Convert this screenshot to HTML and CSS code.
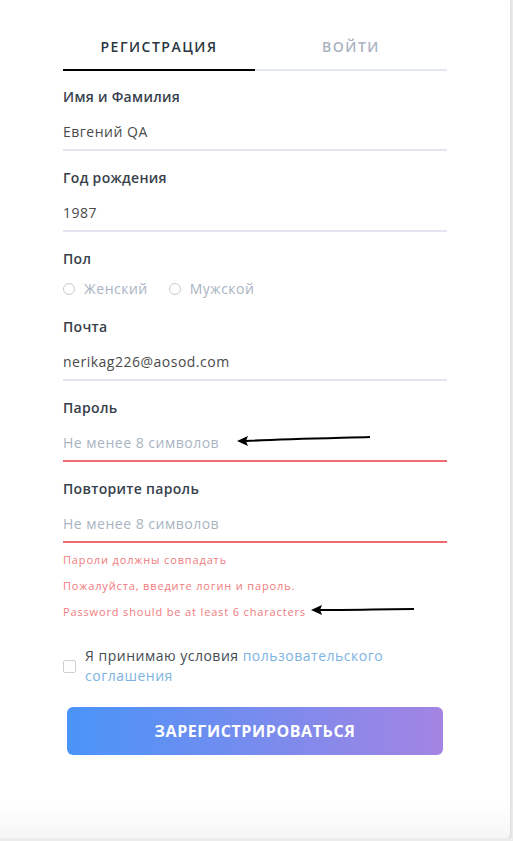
FILE: index.html
```html
<!DOCTYPE html>
<html lang="ru">

<head>
    <meta charset="UTF-8">
    <meta name="viewport" content="width=device-width, initial-scale=1.0">
    <title>Регистрация</title>
    <link rel="stylesheet" href="styles.css">
</head>

<body>
    <div class="card">
        <div class="tabs">
            <div class="tab active">Регистрация</div>
            <div class="tab">Войти</div>
        </div>

        <form class="form">
            <div class="field">
                <div class="label">Имя и Фамилия</div>
                <div class="input">Евгений QA</div>
            </div>

            <div class="field">
                <div class="label">Год рождения</div>
                <div class="input">1987</div>
            </div>

            <div class="field">
                <div class="label">Пол</div>
                <div class="radios">
                    <label class="radio"><span class="circle"></span>Женский</label>
                    <label class="radio"><span class="circle"></span>Мужской</label>
                </div>
            </div>

            <div class="field">
                <div class="label">Почта</div>
                <div class="input">nerikag226@aosod.com</div>
            </div>

            <div class="field">
                <div class="label">Пароль</div>
                <div class="input error placeholder">Не менее 8 символов</div>
            </div>

            <div class="field">
                <div class="label">Повторите пароль</div>
                <div class="input error placeholder">Не менее 8 символов</div>
            </div>

            <div class="errors">
                <div>Пароли должны совпадать</div>
                <div>Пожалуйста, введите логин и пароль.</div>
                <div>Password should be at least 6 characters</div>
            </div>

            <div class="agree">
                <span class="checkbox"></span>
                <div class="agree-text">Я принимаю условия <a href="#">пользовательского соглашения</a></div>
            </div>

            <button type="button" class="submit">Зарегистрироваться</button>
        </form>

        <!-- стрелки-пометки поверх формы -->
        <svg class="arrow arrow-pass" width="140" height="14" viewBox="0 0 140 14">
            <path d="M134 3 C100 4 50 5 10 7" stroke="#000" stroke-width="2" fill="none" />
            <path d="M1 7 L12 2 L10 7 L12 12 Z" fill="#000" />
        </svg>
        <svg class="arrow arrow-err" width="106" height="12" viewBox="0 0 106 12">
            <path d="M104 5 C80 5 40 6 10 6" stroke="#000" stroke-width="2" fill="none" />
            <path d="M1 6 L12 1 L10 6 L12 11 Z" fill="#000" />
        </svg>
    </div>
</body>

</html>
```

FILE: styles.css
```css
body {
    margin: 0;
    background: #ececec;
    font-family: 'Open Sans', sans-serif;
}

.card {
    position: relative;
    width: 510px;
    height: 838px;
    box-sizing: border-box;
    padding: 23px 63px 0 63px;
    background: linear-gradient(to bottom, #fff 96%, #f6f6f6);
    border-bottom-right-radius: 4px;
    box-shadow: 0 1px 3px rgba(0, 0, 0, 0.15);
}

.tabs {
    display: flex;
}

.tab {
    flex: 1;
    padding: 14px 0 12px;
    line-height: 20px;
    text-align: center;
    font-size: 14px;
    font-weight: 600;
    letter-spacing: 1.5px;
    text-transform: uppercase;
    color: #aab3bf;
    border-bottom: 2px solid #e3e7f1;
}

.tab.active {
    color: #2b3640;
    border-bottom-color: #000;
}

.form {
    padding-top: 16px;
}

.field {
    margin-bottom: 17px;
}

.label {
    line-height: 20px;
    font-size: 14px;
    font-weight: 600;
    letter-spacing: 0.3px;
    color: #37414b;
    margin-bottom: 15px;
}

.input {
    line-height: 20px;
    font-size: 14px;
    letter-spacing: 0.5px;
    color: #4a4a4a;
    padding-bottom: 7px;
    border-bottom: 2px solid #e3e6f0;
}

.input.placeholder {
    color: #a9b4c2;
}

.input.error {
    border-bottom-color: #ef6b6f;
}

.radios {
    display: flex;
    gap: 21px;
    margin-top: -5px;
    padding-bottom: 1px;
}

.radio {
    display: flex;
    align-items: center;
    gap: 9px;
    line-height: 20px;
    font-size: 14px;
    letter-spacing: 0.5px;
    color: #a9b4c2;
}

.circle {
    width: 10px;
    height: 10px;
    border: 1px solid #c9ccd1;
    border-radius: 50%;
}

.errors {
    margin-top: -8px;
    font-size: 11px;
    line-height: 16px;
    color: #f07b7e;
    letter-spacing: 0.85px;
}

.errors div {
    margin-bottom: 10px;
}

.agree {
    display: flex;
    align-items: center;
    gap: 9px;
    margin-top: 26px;
}

.checkbox {
    flex: none;
    width: 11px;
    height: 11px;
    border: 1px solid #cfcfcf;
    border-radius: 2px;
}

.agree-text {
    width: 320px;
    font-size: 14px;
    line-height: 20px;
    letter-spacing: 0.5px;
    color: #444b52;
}

.agree-text a {
    color: #7db3e2;
    text-decoration: none;
}

.submit {
    display: block;
    width: 376px;
    height: 48px;
    margin: 21px auto 0;
    border: none;
    border-radius: 6px;
    background: linear-gradient(to right, #4a94f8, #a384e3);
    color: #fff;
    font-family: 'Open Sans', sans-serif;
    font-size: 16px;
    font-weight: 700;
    letter-spacing: 0.6px;
    text-transform: uppercase;
}

.arrow {
    position: absolute;
}

.arrow-pass {
    left: 236px;
    top: 434px;
}

.arrow-err {
    left: 310px;
    top: 604px;
}
```
